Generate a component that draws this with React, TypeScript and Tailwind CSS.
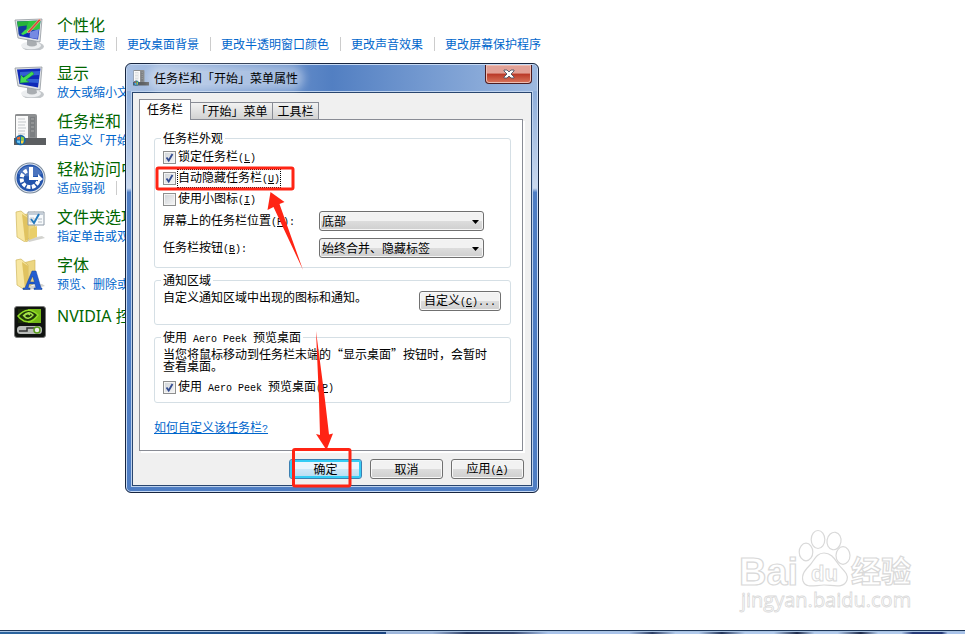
import React from 'react';

const ITEMS = [
  { icon: 'personalize', title: '个性化', links: ['更改主题', '更改桌面背景', '更改半透明窗口颜色', '更改声音效果', '更改屏幕保护程序'] },
  { icon: 'display', title: '显示', links: ['放大或缩小文'] },
  { icon: 'taskbar', title: '任务栏和', links: ['自定义「开始'] },
  { icon: 'ease', title: '轻松访问中', links: ['适应弱视', ''] },
  { icon: 'folder', title: '文件夹选项', links: ['指定单击或双'] },
  { icon: 'fonts', title: '字体', links: ['预览、删除或'] },
  { icon: 'nvidia', title: 'NVIDIA 控', links: [] },
];

const Monitor: React.FC<{ children: React.ReactNode }> = ({ children }) => (
  <>
    <ellipse cx="19" cy="28.5" rx="11" ry="4.5" fill="#c3c7ca" />
    <ellipse cx="17" cy="27.5" rx="10" ry="3.8" fill="#eceef0" />
    <path d="M13 20l9 1 1 6q-5 3-10 0z" fill="#a9adb1" />
    <path d="M1 2l27-1-2 23L4 20z" fill="#dfe2e5" stroke="#93999f" strokeWidth="0.8" />
    <path d="M3 3.500l23.500-1L24 21.500 5.500 18z" fill="#1029b8" />
    {children}
  </>
);

const Folder: React.FC = () => (
  <>
    <path d="M12 29l16-3 3 2-16 4z" fill="#d3d3cf" />
    <path d="M9 5l12-3v23l-9 5z" fill="#ecd682" stroke="#cdb052" strokeWidth="0.6" />
    <path d="M2 2l5-1 7 6v24l-3 1L3 27z" fill="#f8e7a2" stroke="#cfb65d" strokeWidth="0.7" />
    <path d="M8 4l6 4v22l-3 1z" fill="#e0c360" />
  </>
);

const ItemIcon: React.FC<{ name: string; className?: string }> = ({ name, className = 'size-8 shrink-0' }) => (
  <svg viewBox="0 0 32 32" className={className} aria-hidden="true">
    {name === 'personalize' && (
      <Monitor>
        <path d="M14 3l12.500-.5-1 9-9 1-6 3z" fill="#2dc83b" />
        <path d="M3 3.500L15 3l-3 6-8 1z" fill="#27b43a" />
        <path d="M4.500 8.500l8-1v8l-8 1z" fill="#143c9e" />
        <path d="M7 16l4-4 5-2-1 4-6 3z" fill="#3fe04e" />
        <path d="M16 14l9-3-1.500 10-8-1.500z" fill="#8fa2ee" opacity="0.8" />
        <path d="M13 14L25 1l2 1-12 13z" fill="#d94a38" stroke="#f2d3c9" strokeWidth="0.5" />
      </Monitor>
    )}
    {name === 'display' && (
      <Monitor>
        <path d="M6 6l20-1-.5 4L6 10zM6 13h19l-.5 4L7 16z" fill="#4a83e8" opacity="0.6" />
        <path d="M6 17l1-8 2.500 2.500L18 5.500l2 2.500-8 6 3 2z" fill="#44dc54" stroke="#198f32" strokeWidth="0.5" />
      </Monitor>
    )}
    {name === 'taskbar' && (
      <>
        <path d="M1 1q0-1 2-1h18q2 0 2 2v24H1z" fill="#8d8f91" />
        <path d="M2 2h12v22H2z" fill="#fafafa" />
        <path d="M4 5h7M4 8h8M4 11h7M4 14h8M4 17h7M4 20h7" stroke="#c3c7ca" />
        <path d="M16 3h5v20h-5z" fill="#7b7e81" />
        <path d="M17 5h3M17 9h3M17 13h3M17 17h3" stroke="#aaa" />
        <path d="M0 24h32v7H0z" fill="#5b5e61" />
        <circle cx="6.5" cy="26" r="5.2" fill="#1667a4" />
        <path d="M3 23.500l3-1v3H3z" fill="#ef6c31" />
        <path d="M7 22.500l3 1v3H7z" fill="#8dcc44" />
        <path d="M3 26.500h3v3l-3-1z" fill="#6dc5f3" />
        <path d="M7 26.500h3l-1 3H7z" fill="#fbd542" />
      </>
    )}
    {name === 'ease' && (
      <>
        <circle cx="16" cy="16" r="15.5" fill="#7b8b9d" />
        <circle cx="16" cy="16" r="14.5" fill="#e5eaf2" />
        <circle cx="16" cy="16" r="13.5" fill="#2354ac" />
        <path d="M4 12a13 13 0 0124 0q-12 5-24 0" fill="#5d82c6" opacity="0.7" />
        <path d="M13 8.700A8.500 8.500 0 1024.500 18" fill="none" stroke="#fff" strokeWidth="4" strokeDasharray="3.600 1.400" />
        <path d="M15 5h4v10h5v-3l5 5-5 4v-3h-9z" fill="#fff" />
      </>
    )}
    {name === 'folder' && (
      <>
        <Folder />
        <path d="M16 19l7-3v11l-8 3z" fill="#e9ce69" />
        <path d="M14 2h16v13H14z" fill="#f7fafc" stroke="#8e9aa6" />
        <path d="M15 3h14v2H15z" fill="#c3cdd8" />
        <path d="M16 8h4v4h-4z" fill="#fff" stroke="#a6adb4" strokeWidth="0.6" />
        <path d="M17 9l3 4 5-9" fill="none" stroke="#2479bb" strokeWidth="2" />
        <path d="M24 9h4M24 12h4" stroke="#b3bbc4" />
      </>
    )}
    {name === 'fonts' && (
      <>
        <Folder />
        <path d="M18 13h4l5 17h1v1.500h-8V30h2l-1-4h-6l-1 4h2v1.500H9V30h2zm.5 5l-2.500 6h4.500z" fill="#235dd0" stroke="#174095" strokeWidth="0.5" />
      </>
    )}
    {name === 'nvidia' && (
      <>
        <rect x="0.5" y="0.5" width="31" height="31" rx="2.5" fill="#101310" stroke="#777" />
        <path d="M4 3h23v14H4z" fill="#1b2b0b" />
        <path d="M14 3h13v14H14z" fill="#74b816" />
        <path d="M4 10q10-11 20-1-6 9-14 6-4-2-6-5z" fill="#203909" stroke="#91dc26" strokeWidth="1.5" />
        <path d="M9 10q6-6 10-1-5 6-9 1 4-4 6-1" fill="none" stroke="#a7e64b" strokeWidth="1.4" />
        <rect x="3" y="20" width="25" height="8" rx="3.5" fill="#b9bcb9" />
        <path d="M5 25h8v-3h8" fill="none" stroke="#333" strokeWidth="1.5" />
        <circle cx="23" cy="24" r="3" fill="#eee" stroke="#579c19" strokeWidth="1.5" />
      </>
    )}
  </svg>
);

const Mono: React.FC<{ children: React.ReactNode }> = ({ children }) => (
  <span className="whitespace-pre font-['Liberation_Mono',monospace] text-[10px]">{children}</span>
);

const Key: React.FC<{ letter: string; after?: string }> = ({ letter, after = '' }) => (
  <Mono>(<u>{letter}</u>){after}</Mono>
);

const Check: React.FC<{ checked?: boolean; focused?: boolean; children: React.ReactNode }> = ({ checked, focused, children }) => (
  <label className="flex h-3.5 items-center gap-0.5">
    <span className="relative flex size-[13px]">
      <input
        type="checkbox"
        defaultChecked={checked}
        className="peer size-[13px] appearance-none border border-[#8e8f8f] bg-linear-to-br from-[#cfd3d7] to-[#f6f6f6] shadow-[inset_0_0_0_1px_#f4f4f4]"
      />
      <svg viewBox="0 0 13 13" className="pointer-events-none absolute inset-0 hidden peer-checked:block" aria-hidden="true">
        <path d="M3.5 6.5l2.200 3L9.500 3" fill="none" stroke="#334c91" strokeWidth="1.8" />
      </svg>
    </span>
    <span className={focused ? 'outline-1 outline-dotted outline-black' : ''}>{children}</span>
  </label>
);

const Group: React.FC<{ title: React.ReactNode; children: React.ReactNode }> = ({ title, children }) => (
  <fieldset className="rounded-[3px] border border-[#d5dfe5] pr-[9px] pl-2">
    <legend className="-ml-0.5 h-3.5 px-0.5">{title}</legend>
    {children}
  </fieldset>
);

const Dropdown: React.FC<{ id: string; label: string; letter: string; options: string[] }> = ({ id, label, letter, options }) => (
  <div className="flex h-5 items-center">
    <label htmlFor={id} className="w-[156px] leading-[16px]">{label}<Key letter={letter} after=":" /></label>
    <div className="relative flex w-[165px]">
      <select
        id={id}
        className="h-5 w-full appearance-none rounded-[3px] border border-[#707070] bg-linear-to-b from-[#f2f2f2] from-50% via-[#dddddd] via-50% to-[#cfcfcf] px-0.5 text-black shadow-[inset_0_0_0_1px_#f6f6f6]"
      >
        {options.map((option) => (
          <option key={option}>{option}</option>
        ))}
      </select>
      <svg viewBox="0 0 7 4" className="pointer-events-none absolute top-[9px] right-1 h-1 w-[9px]" aria-hidden="true">
        <path d="M0 0h7L3.5 4z" fill="#000" />
      </svg>
    </div>
  </div>
);

const BUTTON = 'h-5 rounded-[3px] border text-center leading-[16px]';
const GREY = 'border-[#707070] bg-linear-to-b from-[#f2f2f2] from-50% via-[#dddddd] via-50% to-[#cfcfcf] shadow-[inset_0_0_0_1px_#f8f8f8]';
const DEFAULT = 'border-[#3c7fb1] bg-linear-to-b from-[#eaf6fd] from-50% via-[#cfe8f7] via-50% to-[#b5dcf2] shadow-[inset_0_0_0_2px_#35cdf5]';

const Annotations: React.FC = () => (
  <svg viewBox="125 63 414 430" className="pointer-events-none absolute -top-px -left-px h-[430px] w-[414px]" aria-hidden="true">
    <g fill="none" stroke="#ff2414" strokeWidth="3">
      <rect x="157" y="168" width="136" height="21" rx="1.5" />
      <rect x="293.5" y="449.5" width="56.5" height="36.5" rx="1.5" />
    </g>
    <path d="M270.5 192l14 10-5 2L303 270l-29.500-63-6 3z" fill="#ff2414" />
    <path d="M316 331L325 400l4 34.500 4-1-6.500 16.500L316 434l4 1-1-35z" fill="#ff2414" />
  </svg>
);

const PropertiesDialog: React.FC = () => (
  <section
    role="dialog"
    aria-labelledby="dialog-title"
    className="absolute top-[63px] left-[125px] w-[414px] rounded-[6px] border border-[#17253f] bg-linear-to-b from-[#8aabd9] from-5% via-[#cbd9ee] via-29% to-[#4e7dc3] to-30% px-[5px] pb-[5px] text-[12px] leading-[14px] text-black shadow-[inset_0_0_0_1px_#c7daf4]"
  >
    <div className="-mx-1 mt-px flex h-[26px] items-center gap-[5px] rounded-t-[4px] bg-linear-to-r from-[#a9c0e2] via-[#527fc2] via-50% to-[#9db9e0] pl-1.5">
      <ItemIcon name="taskbar" className="size-4 shrink-0" />
      <div className="flex-1">
        <h1 id="dialog-title" className="inline-block rounded-full bg-white/40 shadow-[0_0_8px_6px_rgb(255_255_255/0.4)]">任务栏和「开始」菜单属性</h1>
      </div>
      <button
        aria-label="关闭"
        className="mr-[5px] flex h-[19px] w-[47px] items-center justify-center self-start rounded-b-[4px] border border-t-0 border-[#4c1c20] bg-linear-to-b from-[#e2a197] from-45% via-[#b93827] via-50% to-[#d9755c] shadow-[inset_0_0_0_1px_#eebdb2]"
      >
        <svg viewBox="0 0 12 10" className="h-2.5 w-3" aria-hidden="true">
          <path d="M1 1h3l2 2 2-2h3v1L8 5l3 3v1H8L6 7 4 9H1V8l3-3-3-3z" fill="#fff" stroke="#4d5567" strokeWidth="0.9" />
        </svg>
      </button>
    </div>

    <div className="border border-[#bdd2ee]">
      <div className="border border-[#29466f] bg-[#f0f0f0] pt-1.5 pr-2 pb-1.5 pl-1.5">
        <div role="tablist" className="flex items-end">
          <button role="tab" aria-selected="true" className="relative -mb-px h-[21px] w-[52px] border border-b-0 border-[#898c95] bg-white pb-0.5">任务栏</button>
          <button role="tab" aria-selected="false" className="h-[17px] w-[82px] border-t border-r border-[#898c95] bg-linear-to-b from-[#f2f2f2] to-[#d2d2d2]">「开始」菜单</button>
          <button role="tab" aria-selected="false" className="h-[17px] w-[46px] border-t border-r border-[#898c95] bg-linear-to-b from-[#f2f2f2] to-[#d2d2d2]">工具栏</button>
        </div>

        <div role="tabpanel" className="flex flex-col gap-[5px] border border-[#898c95] bg-white pt-[11px] pr-[11px] pb-[13px] pl-3.5 shadow-[2px_2px_0_#ffffff]">
          <Group title="任务栏外观">
            <div className="mt-[5px] flex flex-col gap-[7px]">
              <Check checked>锁定任务栏<Key letter="L" /></Check>
              <Check checked focused>自动隐藏任务栏<Key letter="U" /></Check>
              <Check>使用小图标<Key letter="I" /></Check>
            </div>
            <div className="mt-[5px] mb-[9px] flex flex-col gap-[7px]">
              <Dropdown id="position" label="屏幕上的任务栏位置" letter="P" options={['底部']} />
              <Dropdown id="buttons" label="任务栏按钮" letter="B" options={['始终合并、隐藏标签']} />
            </div>
          </Group>

          <Group title="通知区域">
            <div className="mt-1 mb-[13px] flex items-start justify-between">
              <p className="leading-[12px]">自定义通知区域中出现的图标和通知。</p>
              <button className={`${BUTTON} ${GREY} w-[82px]`}>自定义<Key letter="C" after="..." /></button>
            </div>
          </Group>

          <Group title={<>使用<Mono> Aero Peek </Mono>预览桌面</>}>
            <p className="mt-1 mr-3 mb-2 leading-[12px]">当您将鼠标移动到任务栏末端的“显示桌面”按钮时，会暂时查看桌面。</p>
            <div className="mb-2">
              <Check checked>使用<Mono> Aero Peek </Mono>预览桌面<Key letter="P" /></Check>
            </div>
          </Group>

          <a href="#help" className="mt-3 self-start text-[#0066cc] underline">如何自定义该任务栏<Mono>?</Mono></a>
        </div>

        <div className="-mr-px flex justify-end gap-2 pt-2">
          <button className={`${BUTTON} ${DEFAULT} w-[73px]`}>确定</button>
          <button className={`${BUTTON} ${GREY} w-[73px]`}>取消</button>
          <button className={`${BUTTON} ${GREY} w-[73px]`}>应用<Key letter="A" /></button>
        </div>
      </div>
    </div>

    <Annotations />
  </section>
);

const Watermark: React.FC = () => (
  <svg viewBox="0 0 184 90" className="absolute right-[45px] bottom-[16px] h-[90px] w-[184px]" aria-hidden="true">
    <g fill="#fff" stroke="#d9d9d9" strokeWidth="1.2">
      <text x="3" y="57" fontSize="38" fontWeight="700" fontFamily="Liberation Sans, sans-serif">Bai</text>
      <ellipse cx="70" cy="24" rx="6.8" ry="8.8" />
      <ellipse cx="82" cy="11.500" rx="6.8" ry="9" />
      <ellipse cx="98" cy="13" rx="7" ry="8.8" transform="rotate(10 98 13)" />
      <ellipse cx="107" cy="27.500" rx="7" ry="8.8" />
      <path d="M88 25c8 0 11 7 15 12s10 9 8 15c-3 9-14 5-23 5s-18 4-21-4c-2-7 3-12 7-16s6-12 14-12z" />
      <text x="75" y="53" fontSize="22" fontWeight="700" strokeWidth="0.9" fontFamily="Liberation Sans, sans-serif">du</text>
      <text x="115" y="54" fontSize="30" fontWeight="700" fontFamily="Noto Sans CJK SC, sans-serif">经验</text>
      <text x="5" y="79" fontSize="20" strokeWidth="0.8" fontFamily="Open Sans, sans-serif">jingyan.baidu.com</text>
    </g>
  </svg>
);

const App: React.FC = () => {
  return (
    <div lang="zh-CN" className="relative flex min-h-screen flex-col overflow-hidden bg-white font-['Noto_Sans_CJK_SC',sans-serif]">
      <main className="flex-1 pt-4 pl-3.5">
        <ul className="flex flex-col gap-3">
          {ITEMS.map((item) => (
            <li key={item.title} className="flex h-9 items-center gap-[11px]">
              <ItemIcon name={item.icon} />
              <div className="self-start whitespace-nowrap">
                <h2 className={`text-[16px] text-[#006600] ${item.links.length ? 'mb-1 leading-[16px]' : "font-['Noto_Sans','Noto_Sans_CJK_SC',sans-serif] leading-[24px]"}`}>{item.title}</h2>
                <div className="flex h-4 items-center divide-x divide-[#cccccc] text-[12px] leading-[14px]">
                  {item.links.map((link) => (
                    <a key={link} href="#" className="pr-[11px] pl-2.5 text-[#0066cc] first:pl-0">{link}</a>
                  ))}
                </div>
              </div>
            </li>
          ))}
        </ul>
      </main>

      <PropertiesDialog />
      <Watermark />

      <footer className="border-t border-[#1d3557]">
        <div className="h-px bg-[#a9c3e2]"></div>
        <div className="flex h-0.5">
          <div className="w-2/5 bg-linear-to-r from-[#2c659f] to-[#1b4581]"></div>
          <div className="flex-1 bg-[linear-gradient(90deg,#9db5da_8%,#2d3f66_14%,#3a4d77_22%,#a9c3ea_28%,#a9c3ea_42%,#2d3f66_46%,#b1caec_50%,#b1caec_54%,#24365c_58%,#b1caec_62%,#b1caec_67%,#1d2b4d_71%,#b1caec_74%,#b1caec_78%,#1d2b4d_82%,#b1caec_85%,#b1caec_89%,#263a78_91%,#263a78_96%,#a9c3ea_97%)]"></div>
        </div>
      </footer>
    </div>
  );
};

export default App;
